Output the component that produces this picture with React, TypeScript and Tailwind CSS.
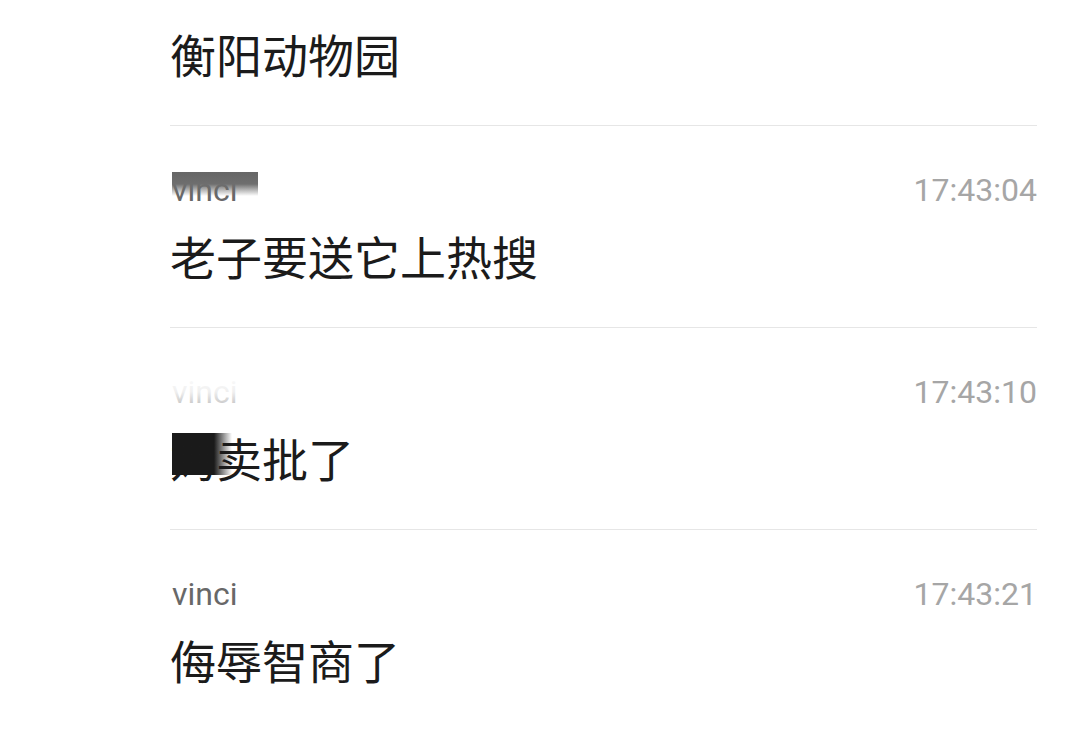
const rows = [
  { name: 'vinci', time: '17:43:04', text: '老子要送它上热搜', mask: 'bar' },
  { name: 'vinci', time: '17:43:10', text: '妈卖批了', mask: 'fade' },
  { name: 'vinci', time: '17:43:21', text: '侮辱智商了', mask: 'none' },
]

const cjk = { fontFamily: '"Noto Sans CJK SC", "Noto Sans", sans-serif' }
const latin = { fontFamily: 'Roboto, "Noto Sans", sans-serif' }

export default function App() {
  return (
    <div className="h-[732px] w-[1080px] overflow-hidden bg-white">
      <div className="ml-[170px] w-[867px]">
        <div className="pt-[25px] pb-[44px]">
          <div className="h-[56px] text-[46px] leading-[56px] text-[#1b1b1b]" style={cjk}>
            衡阳动物园
          </div>
        </div>
        {rows.map((r, i) => (
          <div key={i} className="border-t border-[#e6e6e6] pt-[45px] pb-[44px]">
            <div className="flex h-[38px] items-center justify-between">
              <div className="relative h-[38px] text-[32px] leading-[38px] text-[#686868]" style={latin}>
                <span className="pl-[2px]">{r.name}</span>
                {r.mask === 'bar' && (
                  <div className="absolute left-[2px] top-[1px] h-[24px] w-[86px] bg-gradient-to-b from-[#666666] via-[#6e6e6e] to-[#6e6e6e]/0" />
                )}
                {r.mask === 'fade' && (
                  <div className="absolute -left-[4px] top-0 h-[38px] w-[92px] bg-gradient-to-b from-white via-white/90 to-white/50" />
                )}
              </div>
              <div className="text-[32px] leading-[38px] text-[#a6a6a6]" style={latin}>
                {r.time}
              </div>
            </div>
            <div className="relative mt-[18px] h-[56px] text-[46px] leading-[56px] text-[#1b1b1b]" style={cjk}>
              {r.text}
              {r.mask === 'fade' && (
                <div className="absolute left-[2px] top-[4px] h-[42px] w-[60px] bg-gradient-to-r from-[#1a1a1a] via-[#1a1a1a] via-70% to-[#1a1a1a]/0" />
              )}
            </div>
          </div>
        ))}
      </div>
    </div>
  )
}
